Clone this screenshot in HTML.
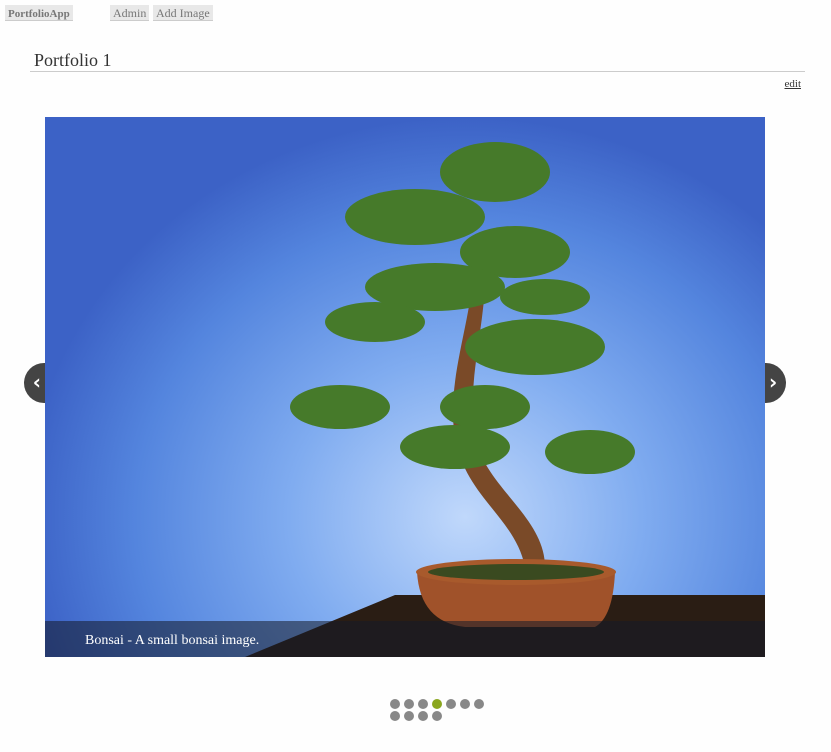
<!DOCTYPE html>
<html><head><meta charset="utf-8"><style>
body{margin:0;background:#fefefe;font-family:"Liberation Serif",serif;width:831px;height:752px;overflow:hidden;position:relative}
.nb{position:absolute;top:5px;height:15px;background:#e8e8e8;border-bottom:1px solid #ccc;color:#777;font-size:12px;line-height:17px;padding:0 3px}
h1{position:absolute;left:34px;top:50px;margin:0;font-weight:normal;font-size:18px;color:#333}
.hr{position:absolute;left:30px;top:71px;width:775px;height:1px;background:#ccc}
.edit{position:absolute;right:30px;top:78px;font-size:11px;color:#333;text-decoration:underline}
.img{position:absolute;left:45px;top:117px;width:720px;height:540px;overflow:hidden;background:radial-gradient(ellipse 440px 400px at 420px 400px,#c0d8fb 0%,#80acf0 40%,#5485de 75%,#3c62c6 100%)}
.cap{position:absolute;left:0;bottom:0;width:720px;height:36px;background:rgba(20,25,40,.55);color:#fff;font-size:14px;line-height:40px;padding-left:40px;box-sizing:border-box}
.arr{position:absolute;top:363px;width:21px;height:40px;background:#444;color:#fff;font-size:20px;line-height:38px;font-weight:bold;font-family:"DejaVu Sans",sans-serif}
.dot{position:absolute;width:10px;height:10px;border-radius:50%;background:#888}
</style></head><body>
<div class="nb" style="left:5px;font-weight:bold;font-size:11px;line-height:19px">PortfolioApp</div>
<div class="nb" style="left:110px">Admin</div>
<div class="nb" style="left:153px">Add Image</div>
<h1>Portfolio 1</h1><div class="hr"></div>
<div class="edit">edit</div>
<div class="img">
<svg width="720" height="540" style="position:absolute;left:0;top:0">
<polygon points="200,540 350,478 720,478 720,540" fill="#2a1d14"/>
<path d="M480,450 C470,400 420,380 410,320 C400,260 430,200 430,130 L440,130 C445,200 420,260 430,320 C440,370 500,400 500,450Z" fill="#7a4a28"/>
<g fill="#467a2a">
<ellipse cx="450" cy="55" rx="55" ry="30"/>
<ellipse cx="370" cy="100" rx="70" ry="28"/>
<ellipse cx="470" cy="135" rx="55" ry="26"/>
<ellipse cx="390" cy="170" rx="70" ry="24"/>
<ellipse cx="500" cy="180" rx="45" ry="18"/>
<ellipse cx="330" cy="205" rx="50" ry="20"/>
<ellipse cx="490" cy="230" rx="70" ry="28"/>
<ellipse cx="295" cy="290" rx="50" ry="22"/>
<ellipse cx="410" cy="330" rx="55" ry="22"/>
<ellipse cx="440" cy="290" rx="45" ry="22"/>
<ellipse cx="545" cy="335" rx="45" ry="22"/>
</g>
<path d="M372,455 Q375,505 420,510 L550,510 Q568,500 570,455Z" fill="#a0522a"/>
<ellipse cx="471" cy="455" rx="100" ry="13" fill="#a85a2c"/>
<ellipse cx="471" cy="455" rx="88" ry="8" fill="#3a4a20"/>
</svg>
<div class="cap">Bonsai - A small bonsai image.</div>
</div>
<div class="arr" style="left:24px;border-radius:20px 0 0 20px;text-align:right;padding-right:4px;box-sizing:border-box">‹</div>
<div class="arr" style="left:765px;border-radius:0 20px 20px 0;text-align:left;padding-left:4px;box-sizing:border-box">›</div>
<div class="dot" style="left:390px;top:699px"></div><div class="dot" style="left:404px;top:699px"></div><div class="dot" style="left:418px;top:699px"></div><div class="dot" style="left:432px;top:699px;background:#8aa61e"></div><div class="dot" style="left:446px;top:699px"></div><div class="dot" style="left:460px;top:699px"></div><div class="dot" style="left:474px;top:699px"></div>
<div class="dot" style="left:390px;top:711px"></div><div class="dot" style="left:404px;top:711px"></div><div class="dot" style="left:418px;top:711px"></div><div class="dot" style="left:432px;top:711px"></div>
</body></html>
